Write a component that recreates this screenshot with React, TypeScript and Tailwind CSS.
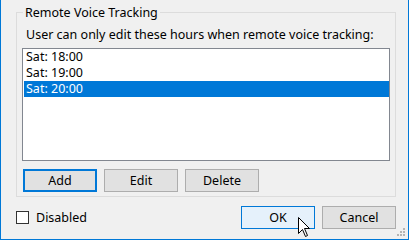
import React, { useState } from 'react'

const hours = ['Sat: 18:00', 'Sat: 19:00', 'Sat: 20:00']

const font = { fontFamily: '"Noto Sans", "Liberation Sans", sans-serif' }

const Cursor = () => (
  <svg className="absolute left-[297px] top-[217px]" width="13" height="21" viewBox="0 0 13 21">
    <path
      d="M0.5 0.5 L0.5 16.5 L4.5 12.5 L7.5 19.5 L9.5 18.5 L6.5 11.5 L11.5 11.5 Z"
      fill="#fff"
      stroke="#000"
      strokeWidth="1"
      strokeLinejoin="miter"
    />
  </svg>
)

const Grip = () => (
  <svg className="absolute right-[2px] bottom-[2px]" width="10" height="10" viewBox="0 0 10 10">
    <rect x="7" y="1" width="2" height="2" fill="#b4b4b4" />
    <rect x="4" y="4" width="2" height="2" fill="#b4b4b4" />
    <rect x="7" y="4" width="2" height="2" fill="#b4b4b4" />
    <rect x="1" y="7" width="2" height="2" fill="#b4b4b4" />
    <rect x="4" y="7" width="2" height="2" fill="#b4b4b4" />
    <rect x="7" y="7" width="2" height="2" fill="#b4b4b4" />
  </svg>
)

export default function App() {
  const [selected, setSelected] = useState(2)
  const [disabled, setDisabled] = useState(false)

  return (
    <div
      className="relative w-[409px] h-[240px] bg-[#f0f0f0] border-x border-b border-[#0078d7] pl-[15px] text-[12.5px] text-black flex flex-col"
      style={font}
    >
      <fieldset className="mt-[5px] w-[380px] h-[192px] border border-[#dcdcdc] px-[5px] min-w-0">
        <legend className="ml-[1px] px-[2px] leading-[15px]">Remote Voice Tracking</legend>
        <div className="mt-[7px] pl-[4px] leading-[16px]">
          User can only edit these hours when remote voice tracking:
        </div>
        <div className="mt-[5px] h-[113px] border border-[#828790] bg-white pl-[1px] pr-0">
          {hours.map((h, i) => (
            <div
              key={h}
              onClick={() => setSelected(i)}
              className={
                'h-[16px] leading-[16px] pl-[2px] ' +
                (i === selected ? 'bg-[#0078d7] text-white' : 'text-black')
              }
            >
              {h}
            </div>
          ))}
        </div>
        <div className="mt-[8px] ml-[1px] flex gap-[7px]">
          <button className="w-[74px] h-[23px] border-2 border-[#0078d7] bg-[#e1e1e1] leading-[19px]">Add</button>
          <button className="w-[74px] h-[23px] border border-[#adadad] bg-[#e1e1e1] leading-[21px]">Edit</button>
          <button className="w-[74px] h-[23px] border border-[#adadad] bg-[#e1e1e1] leading-[21px]">Delete</button>
        </div>
      </fieldset>

      <div className="mt-[9px] w-[380px] flex items-center">
        <label className="flex items-center gap-[7px] cursor-default">
          <span
            onClick={() => setDisabled(!disabled)}
            className="w-[13px] h-[13px] border border-[#333333] bg-white flex items-center justify-center text-[10px] leading-none"
          >
            {disabled ? '✓' : ''}
          </span>
          <span className="leading-[16px]">Disabled</span>
        </label>
        <div className="ml-auto flex gap-[7px]">
          <button className="w-[74px] h-[23px] border border-[#0078d7] bg-[#e5f1fb] leading-[21px]">OK</button>
          <button className="w-[74px] h-[23px] border border-[#adadad] bg-[#e1e1e1] leading-[21px]">Cancel</button>
        </div>
      </div>

      <Cursor />
      <Grip />
    </div>
  )
}
